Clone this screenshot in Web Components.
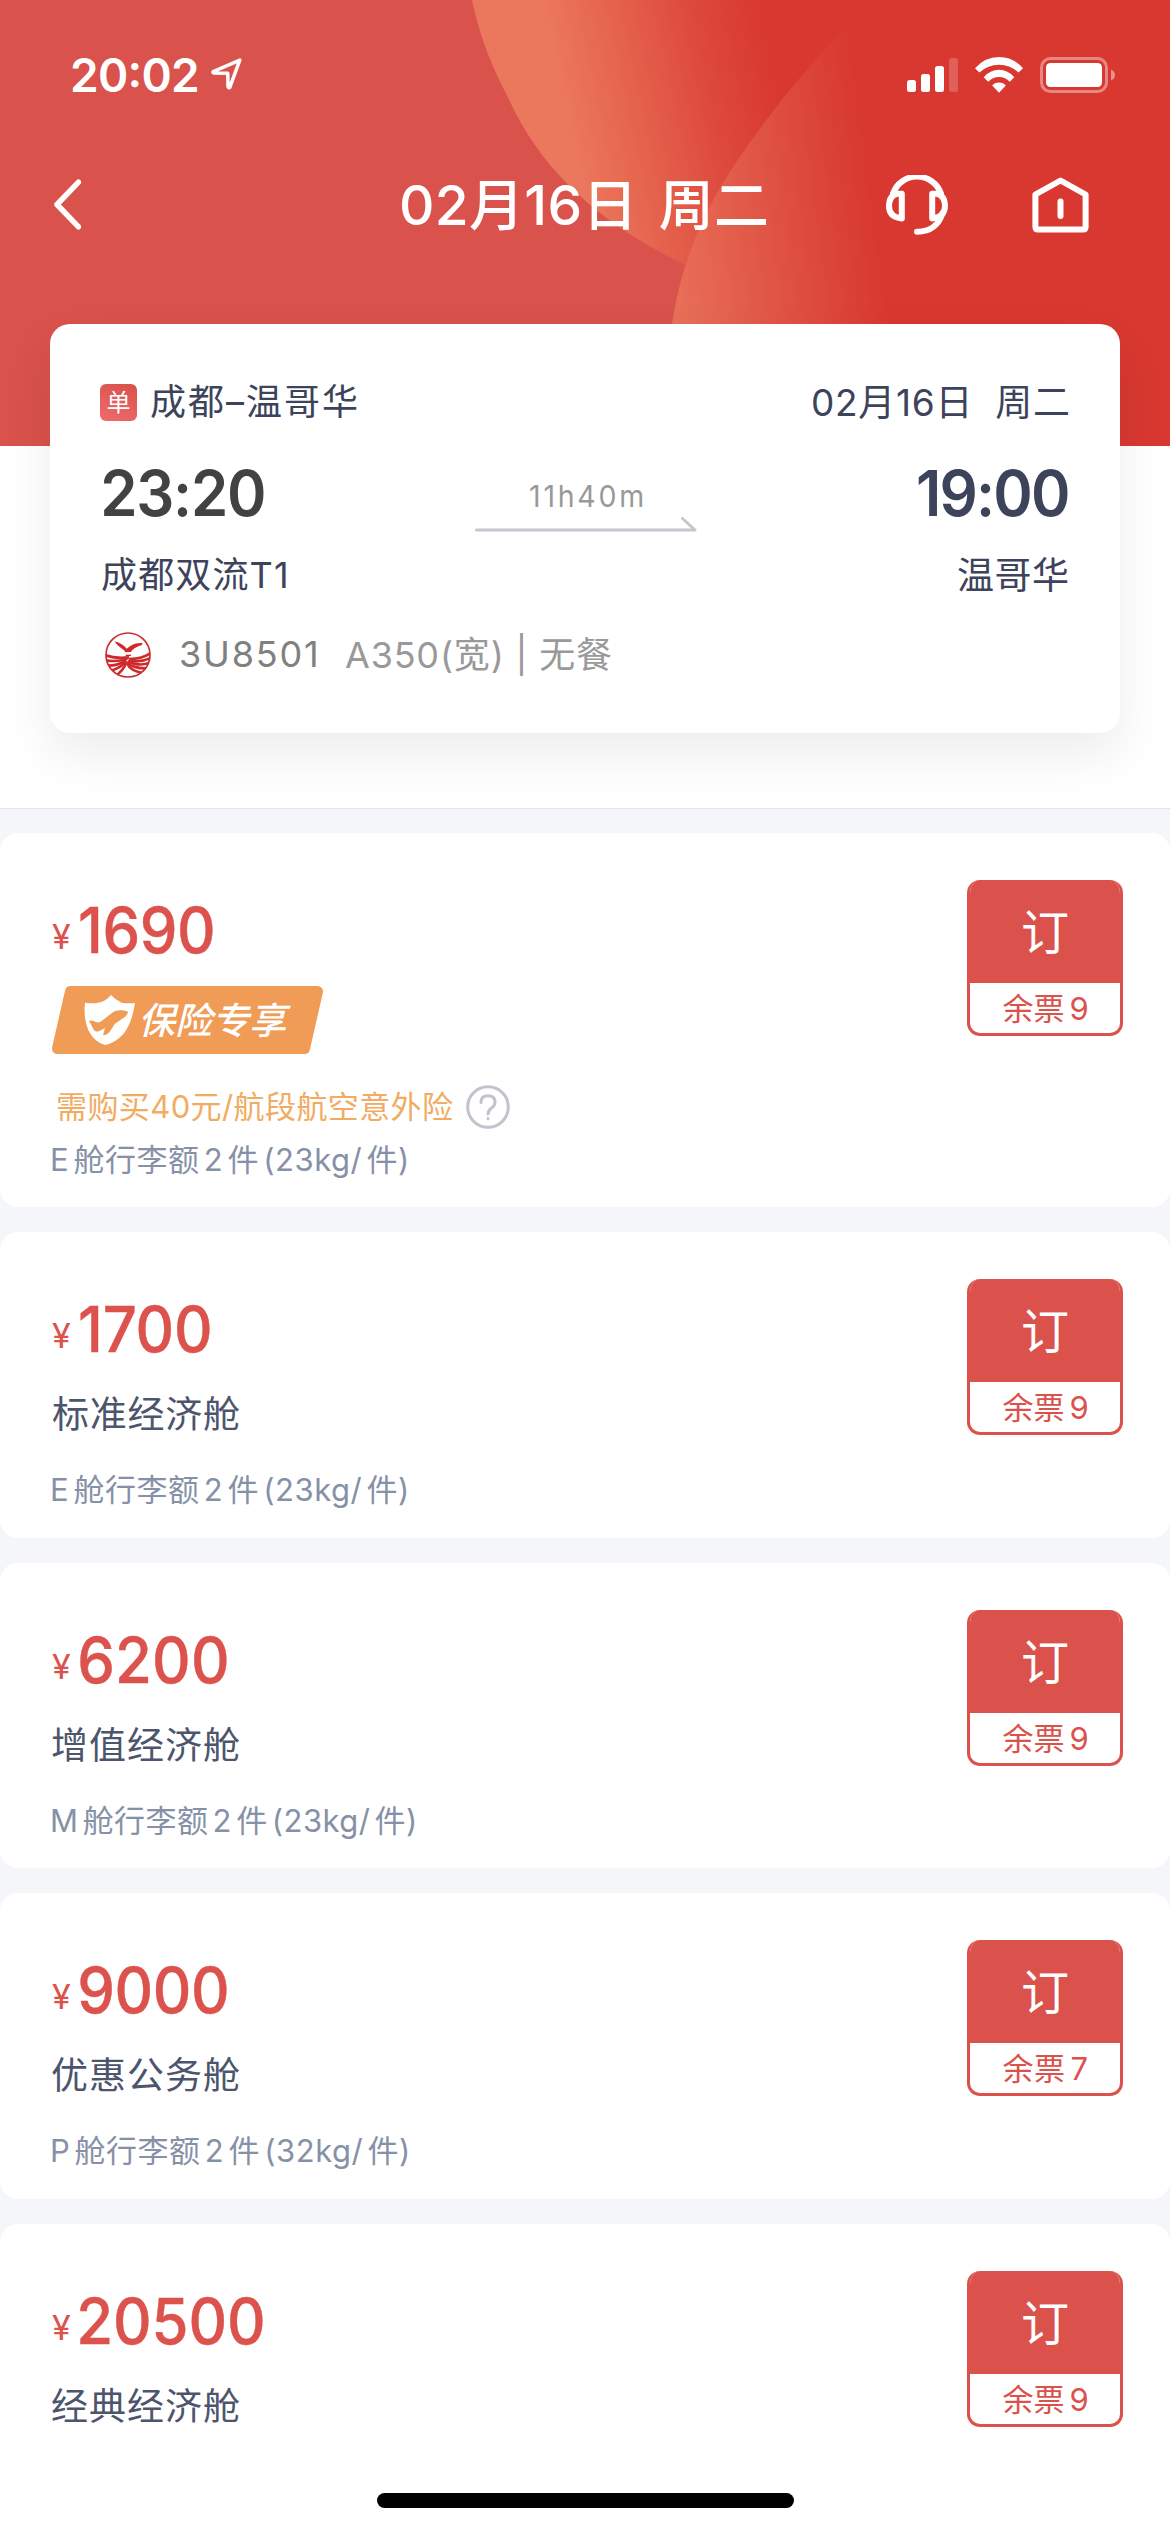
<!DOCTYPE html>
<html lang="zh-CN">
<head>
<meta charset="utf-8">
<title>航班舱位</title>
<style>
html,body{margin:0;padding:0;background:#fff}
body{width:1170px;height:2532px;overflow:hidden;font-family:Inter,"Noto Sans CJK SC",sans-serif;font-feature-settings:"calt" 0}
</style>
</head>
<body>
<fare-page></fare-page>
<script>
const define=(name,html,setup)=>customElements.define(name,class extends HTMLElement{
  connectedCallback(){
    if(this.shadowRoot)return;
    const r=this.attachShadow({mode:'open'});
    r.innerHTML=typeof html==='function'?html(this):html;
    if(setup)setup(this,r);
  }
});

/* Text whose visible width is set by "w" through tracking.
   "ws" adds to every space, "sx" condenses the glyphs. */
const pen=document.createElement('canvas').getContext('2d');
define('ink-text',`<style>:host{display:block;flex:none;white-space:pre;transform-origin:0 50%}</style><slot></slot>`,el=>{
  const cs=getComputedStyle(el),t=el.textContent,ws=+el.getAttribute('ws')||0,sx=+el.getAttribute('sx')||1;
  const target=+el.getAttribute('w'),w=target/sx;
  pen.font=`${cs.fontWeight} ${cs.fontSize} Inter,"Noto Sans CJK SC",sans-serif`;
  const m=pen.measureText(t),ink=m.actualBoundingBoxRight+m.actualBoundingBoxLeft+ws*(t.split(' ').length-1);
  el.style.width=w+'px';
  el.style.letterSpacing=(t.length>1?(w-ink)/(t.length-1):0)+'px';
  el.style.textIndent=m.actualBoundingBoxLeft+'px';
  if(ws)el.style.wordSpacing=ws+'px';
  if(sx!==1){el.style.transform=`scaleX(${sx})`;el.style.marginRight=(target-w)+'px';}
});

define('status-bar',`<style>
:host{display:flex;align-items:center;height:149px;padding:0 55px 0 72px;box-sizing:border-box;color:#fff}
ink-text{font-size:46px;font-weight:600;line-height:60px;font-feature-settings:"calt" 1}
svg{display:block;flex:none}
.loc{margin:0 auto 2px 14px}
</style>
<ink-text w="125">20:02</ink-text>
<svg class="loc" width="31" height="32" viewBox="0 0 31 32"><path d="M28.8 2.2 2.2 13.6Q1.6 14.8 3 15L16.8 15.2 17 28.6Q17.4 30.2 18.8 29.4Z" fill="none" stroke="#fff" stroke-width="3.5" stroke-linejoin="round"/></svg>
<svg width="51" height="36" viewBox="0 0 51 36" fill="#fff"><rect y="23" width="9" height="12" rx="2.5"/><rect x="14" y="17" width="9" height="18" rx="2.5"/><rect x="28" y="9" width="9" height="26" rx="2.5"/><rect x="42" y="1" width="9" height="34" rx="2.5" opacity=".2"/></svg>
<svg style="margin:0 17px" width="48" height="36" viewBox="0 0 48 36" fill="#fff"><path d="M0 11.2Q10 0 24 0T48 11.2L43.6 15.6Q35 7.8 24 7.8T4.4 15.6Z"/><path d="M8.7 20.3Q15 12.8 24 12.8T39.3 20.3L34.8 24.8Q30.5 20 24 20T13.2 24.8Z"/><path d="M17.2 28.6Q19.5 25.4 24 25.4T30.8 28.6L24 35.8Z"/></svg>
<svg width="75" height="36" viewBox="0 0 75 36"><rect x="1.5" y="1.5" width="65" height="33" rx="9" fill="none" stroke="#fff" stroke-width="3" opacity=".4"/><rect x="6" y="6" width="56" height="24" rx="4.5" fill="#fff"/><path d="M71 12.5Q75 14.5 75 18T71 23.5Z" fill="#fff" opacity=".45"/></svg>`);

define('nav-bar',`<style>
:host{display:flex;align-items:center;height:111px;padding-left:54px;color:#fff}
ink-text{font-size:55px;font-weight:500;line-height:70px;margin:0 119px 0 321px}
svg{display:block;flex:none;fill:none;stroke:#fff;stroke-linecap:round;stroke-linejoin:round}
</style>
<svg width="27" height="51" viewBox="0 0 27 51" stroke-width="5.5"><path d="M24.5 3.2 3 25.5 24.5 47.800"/></svg>
<ink-text w="365" ws="6">02月16日 周二</ink-text>
<svg width="62" height="60" viewBox="0 0 62 60" stroke-width="6"><path d="M7 18.5A25.5 25.5 0 0 1 55 18.5"/><path d="M15.8 18.8V43.4Q3 42 3 31.3 3.2 20.5 11 18.8Z"/><path d="M46.2 18.8V43.4Q58.8 42 59 31.3 58.8 20.5 51 18.8Z"/><path d="M56.5 38Q51 56.5 31 56.8"/></svg>
<svg style="margin-left:84px" width="57" height="56" viewBox="0 0 57 56" stroke-width="6"><path d="M28.5 3.5 53.6 17.5V50Q53.6 52.5 51 52.5H6Q3.4 52.5 3.4 50V17.5Z"/><path d="M28.5 24.5V39"/></svg>`);

define('hero-header',`<style>
:host{display:grid;height:446px;background:#d9524b}
:host>*{grid-area:1/1}
svg{display:block}
</style>
<svg width="1170" height="446" viewBox="0 0 1170 446"><defs>
<linearGradient id="a" gradientUnits="userSpaceOnUse" x1="550" y1="30" x2="757" y2="-14"><stop offset="0" stop-color="#eb775c"/><stop offset=".35" stop-color="#e4604b"/><stop offset=".7" stop-color="#dd473c"/><stop offset="1" stop-color="#d83830"/></linearGradient>
<linearGradient id="b" gradientUnits="userSpaceOnUse" x1="665" y1="300" x2="882" y2="270"><stop offset="0" stop-color="#e97259"/><stop offset=".5" stop-color="#e05545"/><stop offset="1" stop-color="#d83830"/></linearGradient></defs>
<path d="M472 0C484 55 500 80 515 112 550 180 610 230 692 268L760 446H1170V0Z" fill="url(#a)"/>
<path d="M843 30Q778 98 731 170T672 324V446H1170V30Z" fill="url(#b)"/></svg>
<div><status-bar></status-bar><nav-bar></nav-bar></div>`);

define('airline-logo',`<style>:host{display:block;width:46px;height:46px}svg{display:block}</style>
<svg width="46" height="46" viewBox="45 51 138 138" fill="none" stroke="#cf2a2c"><clipPath id="c"><circle cx="114" cy="120" r="66"/></clipPath><circle cx="114" cy="120" r="66" stroke-width="5"/>
<path d="M74 79C90 82 102 92 110 101 124 88 140 83 158 84L155 91C138 95 130 102 123 111L106 112C103 102 85 98 74 79Z" fill="#cf2a2c" stroke="none"/>
<path d="M107 121h16" stroke-width="4"/>
<g clip-path="url(#c)" stroke-width="8"><path d="M44 120Q76 132 117 127"/><path d="M46 136Q82 142 112 131"/><path d="M48 152Q84 153 109 136"/><path d="M58 168Q92 161 107 139"/><path d="M74 184Q100 168 109 142"/><path d="M184 112Q160 132 117 132"/><path d="M184 127Q155 145 116 135"/><path d="M180 143Q145 156 114 138"/><path d="M174 160Q130 162 111 141"/><path d="M160 174Q122 169 110 144"/></g></svg>`);

define('flight-card',`<style>
:host{position:relative;display:flex;flex-direction:column;margin:-122px 50px 0;height:409px;padding:57px 52px 0 50px;box-sizing:border-box;border-radius:20px;background:#fff;color:#3c435a;font-size:37px;line-height:43px;box-shadow:0 22px 50px rgba(0,0,0,.075)}
.row{display:flex;align-items:center;height:43px}
.end{margin-left:auto}
.tag{display:flex;align-items:center;justify-content:center;width:37px;height:37px;margin-right:14px;border-radius:6px;background:linear-gradient(200deg,#d9504b,#ee6c6c);color:#fff;font-size:24px;line-height:36px}
.times{height:76px;margin-top:34px;align-items:flex-start;font-size:63px;font-weight:600;line-height:70px}
.dep{color:#424242;margin-left:3px}
.mid{display:flex;flex-direction:column;align-items:center;margin:23px 0 0 211px;width:222px}
.mid ink-text{font-size:30px;font-weight:400;line-height:30px;color:#999}
svg{display:block;margin-top:6px}
.ports{margin-top:20px}
.meta{height:47px;margin-top:34px;padding-left:5px;color:#999;font-size:36px;line-height:47px}
.no{margin:0 29px 0 30px;color:#808080}
</style>
<div class="row"><span class="tag">单</span><ink-text w="206" style="font-size:36px;line-height:45px">成都–温哥华</ink-text><ink-text class="end" w="255">02月16日  周二</ink-text></div>
<div class="row times"><ink-text class="dep" w="161" sx=".95">23:20</ink-text>
<div class="mid"><ink-text w="112" sx=".95">11h40m</ink-text><svg width="222" height="15" viewBox="0 0 222 15" fill="none" stroke="#c3c7cf" stroke-width="3" stroke-linecap="round" stroke-linejoin="round"><path d="M1.5 13H220L207.5 1.5"/></svg></div>
<ink-text class="end" w="150" sx=".95">19:00</ink-text></div>
<div class="row ports"><ink-text w="184" style="margin-left:2px;font-size:36px">成都双流T1</ink-text><ink-text class="end" w="110">温哥华</ink-text></div>
<div class="row meta"><airline-logo></airline-logo><ink-text class="no" w="135">3U8501</ink-text><ink-text w="266" style="padding-top:2px">A350(宽) | 无餐</ink-text></div>`);

define('book-button',el=>`<style>
:host{display:flex;flex-direction:column;box-sizing:border-box;width:156px;height:156px;border:3px solid #db524c;border-top:0;border-radius:13px;overflow:hidden;background:#fff;color:#db524c}
b{display:flex;justify-content:center;align-items:center;height:103px;margin:0 -3px;background:#db524c;color:#fff;font-weight:400;font-size:48px;line-height:103px;padding-top:2px;box-sizing:border-box}
.left{display:flex;justify-content:center;height:50px;font-size:31px;line-height:51px}
</style><b>订</b><div class="left"><ink-text w="85" ws="-4">余票 ${el.getAttribute('left')}</ink-text></div>`);

define('insurance-badge',`<style>
:host{display:grid;width:271px;height:68px;margin-top:26px;align-items:center}
:host>*{grid-area:1/1}
svg{display:block}
ink-text{margin-left:86px;color:#fff;font-size:37px;font-weight:500;font-style:italic;line-height:67px}
</style>
<svg width="271" height="68" viewBox="0 0 271 68"><path d="M18.5 5.5H265.5L252.5 62.5H5.5Z" fill="#f09b56" stroke="#f09b56" stroke-width="11" stroke-linejoin="round"/>
<g transform="translate(-12 -16) scale(.33333)"><path d="M213 75Q195 97 170 99 148 101 135 98 130 150 146 183 165 218 195 225 225 220 250 192 276 160 285 99 262 101 245 98 226 90 213 75Z" fill="#fff"/><path d="M147 152Q160 150 167 156 174 159 182 155L213 131Q226 120 245 121 262 122 264 127 262 137 250 144L224 162 211 183Q203 195 189 196L195 174 178 183Q168 187 162 181Z" fill="#f09b56"/></g></svg>
<ink-text w="147">保险专享</ink-text>`);

define('fare-card',el=>{
  const g=n=>el.getAttribute(n);
  return `<style>
:host{display:flex;justify-content:space-between;align-items:flex-start;box-sizing:border-box;height:305.67px;padding:47px 47px 0 52px;border-radius:18px;background:#fff}
:host([promo]){height:374px}
:host([last]){height:203px;border-radius:18px 18px 0 0}
.info{padding-top:20px}
.price{display:flex;height:60px;line-height:60px;color:#dc524c}
.cur{font-size:34px;line-height:74px;margin-right:8px}
.num{font-size:63px;font-weight:500;-webkit-text-stroke:.4px #dc524c}
.name{margin-top:34px;font-size:37px;line-height:44px;color:#4c556c}
.bag{margin-top:33px;font-size:31px;line-height:40px;color:#8691a7}
.need{display:flex;align-items:center;gap:13px;height:42px;margin-top:32px;padding-left:6px;color:#f2ab62;font-size:31px;line-height:42px}
:host([promo]) .bag{margin-top:12px}
svg{display:block}
</style>
<div class="info"><div class="price"><ink-text class="cur" w="20">¥</ink-text><ink-text class="num" sx=".95" w="${g('pw')}">${g('price')}</ink-text></div>
${el.hasAttribute('promo')?`<insurance-badge></insurance-badge><div class="need"><ink-text w="395">需购买40元/航段航空意外险</ink-text><svg width="44" height="44" viewBox="0 0 44 44" fill="none" stroke="#c1c3cd" stroke-width="3" stroke-linecap="round"><circle cx="22" cy="22" r="20.3"/><path d="M15 17.5Q15 10.8 22 10.8T29 17.3Q29 20.5 25.5 23 22 25.5 22 29"/><path d="M22 33.6V33.8"/></svg></div>`
:`<ink-text class="name" w="187">${g('name')}</ink-text>`}
${g('bag')?`<ink-text class="bag" ws="-5" w="${g('bw')}">${g('bag')}</ink-text>`:''}</div>
<book-button left="${g('left')}"></book-button>`});

define('home-indicator',`<style>:host{display:flex;justify-content:center;height:105px;padding-top:66px;box-sizing:border-box;background:#fff}i{width:417px;height:15px;border-radius:8px;background:#000}</style><i></i>`);

define('fare-page',`<style>
:host{display:block;width:1170px}
.top{height:808px;border-bottom:1px solid #e3e5e8}
.list{display:flex;flex-direction:column;gap:25px;padding-top:24px;background:#f5f6fa}
</style>
<div class="top"><hero-header></hero-header><flight-card></flight-card></div>
<div class="list">
<fare-card promo price="1690" pw="133" bag="E 舱行李额 2 件 (23kg/ 件)" bw="354" left="9"></fare-card>
<fare-card price="1700" pw="130" name="标准经济舱" bag="E 舱行李额 2 件 (23kg/ 件)" bw="354" left="9"></fare-card>
<fare-card price="6200" pw="147" name="增值经济舱" bag="M 舱行李额 2 件 (23kg/ 件)" bw="362" left="9"></fare-card>
<fare-card price="9000" pw="147" name="优惠公务舱" bag="P 舱行李额 2 件 (32kg/ 件)" bw="355" left="7"></fare-card>
<fare-card last price="20500" pw="183" name="经典经济舱" left="9"></fare-card>
</div>
<home-indicator></home-indicator>`);
</script>
</body>
</html>
